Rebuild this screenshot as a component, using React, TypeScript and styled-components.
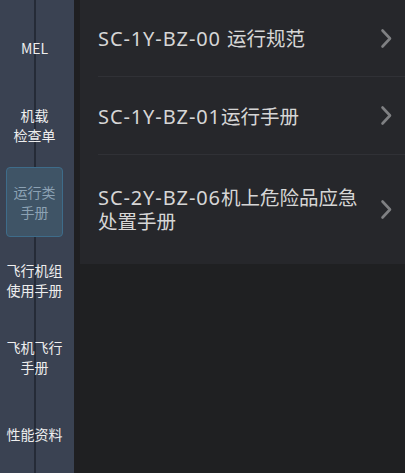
import React from "react";
import styled, { createGlobalStyle } from "styled-components";

const GlobalStyle = createGlobalStyle`
  html, body {
    margin: 0;
    padding: 0;
    background: #1f2022;
  }
  body {
    font-family: "Noto Sans CJK SC", "Noto Sans", sans-serif;
  }
`;

const Page = styled.div`
  display: flex;
  width: 405px;
  height: 473px;
  overflow: hidden;
  background: #1f2022;
`;

const Sidebar = styled.nav`
  width: 74px;
  flex-shrink: 0;
  padding: 9px 5px 0 0;
  box-sizing: border-box;
  display: flex;
  flex-direction: column;
  background: linear-gradient(
    to right,
    #3a4252 34px,
    #252b37 34px,
    #252b37 36px,
    #3a4252 36px
  );
`;

const SideItem = styled.div`
  height: 78px;
  display: flex;
  align-items: center;
  justify-content: center;
`;

const SideLabel = styled.div<{ $active?: boolean }>`
  width: 57px;
  height: 70px;
  box-sizing: border-box;
  display: flex;
  align-items: center;
  justify-content: center;
  text-align: center;
  white-space: nowrap;
  font-size: 14px;
  line-height: 20px;
  color: ${(p) => (p.$active ? "#8ca2b4" : "#eeeeee")};
  background: ${(p) => (p.$active ? "#3f5466" : "transparent")};
  border: 1px solid ${(p) => (p.$active ? "#3e6c8a" : "transparent")};
  border-radius: 4px;
`;

const Gap = styled.div`
  width: 6px;
  flex-shrink: 0;
  background: #1f1f21;
`;

const Main = styled.main`
  flex: 1;
  display: flex;
  flex-direction: column;
`;

const List = styled.div`
  background: #26272b;
`;

const Row = styled.div<{ $h: number; $last?: boolean }>`
  height: ${(p) => p.$h}px;
  display: flex;
  align-items: center;
  margin-left: 18px;
  padding-right: 12px;
  border-bottom: 1px solid ${(p) => (p.$last ? "transparent" : "#303136")};
  box-sizing: border-box;
`;

const Title = styled.div`
  flex: 1;
  font-size: 19.5px;
  line-height: 24px;
  color: #d6d6d6;
  padding-right: 10px;
`;

const Code = styled.span`
  font-family: "Noto Sans", "Noto Sans CJK SC", sans-serif;
  font-size: 20px;
  line-height: 1;
  letter-spacing: 0.9px;
`;

const Chevron = () => (
  <svg width="13" height="21" viewBox="0 0 13 21">
    <path
      d="M2.5 2.5 L10 10.5 L2.5 18.5"
      fill="none"
      stroke="#7f8083"
      strokeWidth="2.6"
      strokeLinecap="round"
      strokeLinejoin="round"
    />
  </svg>
);

const sideItems = [
  ["MEL"],
  ["机载", "检查单"],
  ["运行类", "手册"],
  ["飞行机组", "使用手册"],
  ["飞机飞行", "手册"],
  ["性能资料"],
];

const rows = [
  { code: "SC-1Y-BZ-00 ", name: "运行规范", h: 77 },
  { code: "SC-1Y-BZ-01", name: "运行手册", h: 78 },
  { code: "SC-2Y-BZ-06", name: "机上危险品应急处置手册", h: 109 },
];

export default function App() {
  return (
    <Page>
      <GlobalStyle />
      <Sidebar>
        {sideItems.map((lines, i) => (
          <SideItem key={i}>
            <SideLabel $active={i === 2}>
              <div>
                {lines.map((l) => (
                  <div key={l}>{l}</div>
                ))}
              </div>
            </SideLabel>
          </SideItem>
        ))}
      </Sidebar>
      <Gap />
      <Main>
        <List>
          {rows.map((r, i) => (
            <Row key={r.code} $h={r.h} $last={i === rows.length - 1}>
              <Title>
                <Code>{r.code}</Code>
                {r.name}
              </Title>
              <Chevron />
            </Row>
          ))}
        </List>
      </Main>
    </Page>
  );
}
